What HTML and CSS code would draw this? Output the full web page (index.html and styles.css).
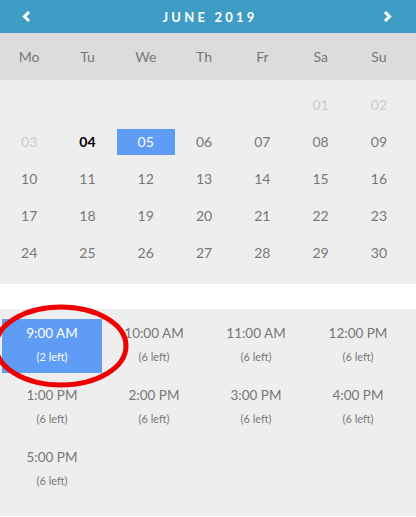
FILE: index.html
```html
<!DOCTYPE html>
<html lang="en">
<head>
    <meta charset="UTF-8">
    <meta name="viewport" content="width=device-width, initial-scale=1.0">
    <title>Book a slot</title>
    <link rel="stylesheet" href="styles.css">
</head>
<body>
    <div class="calendar">
        <div class="cal-header">
            <span class="nav">
                <svg width="9" height="11" viewBox="0 0 9 11"><path d="M7 1 L2.5 5.5 L7 10" fill="none" stroke="#fff" stroke-width="3"/></svg>
            </span>
            <span class="month">JUNE 2019</span>
            <span class="nav">
                <svg width="9" height="11" viewBox="0 0 9 11"><path d="M2 1 L6.5 5.5 L2 10" fill="none" stroke="#fff" stroke-width="3"/></svg>
            </span>
        </div>

        <div class="weekdays">
            <span>Mo</span><span>Tu</span><span>We</span><span>Th</span><span>Fr</span><span>Sa</span><span>Su</span>
        </div>

        <div class="days">
            <span></span><span></span><span></span><span></span><span></span>
            <span class="off">01</span><span class="off">02</span>
            <span class="off">03</span><span class="today">04</span><span class="picked">05</span><span>06</span><span>07</span><span>08</span><span>09</span>
            <span>10</span><span>11</span><span>12</span><span>13</span><span>14</span><span>15</span><span>16</span>
            <span>17</span><span>18</span><span>19</span><span>20</span><span>21</span><span>22</span><span>23</span>
            <span>24</span><span>25</span><span>26</span><span>27</span><span>28</span><span>29</span><span>30</span>
        </div>
    </div>

    <div class="slots">
        <div class="slot selected"><div class="time">9:00 AM</div><div class="left">(2 left)</div></div>
        <div class="slot"><div class="time">10:00 AM</div><div class="left">(6 left)</div></div>
        <div class="slot"><div class="time">11:00 AM</div><div class="left">(6 left)</div></div>
        <div class="slot"><div class="time">12:00 PM</div><div class="left">(6 left)</div></div>
        <div class="slot"><div class="time">1:00 PM</div><div class="left">(6 left)</div></div>
        <div class="slot"><div class="time">2:00 PM</div><div class="left">(6 left)</div></div>
        <div class="slot"><div class="time">3:00 PM</div><div class="left">(6 left)</div></div>
        <div class="slot"><div class="time">4:00 PM</div><div class="left">(6 left)</div></div>
        <div class="slot"><div class="time">5:00 PM</div><div class="left">(6 left)</div></div>

        <!-- annotation -->
        <svg class="mark" width="140" height="90" viewBox="0 0 140 90">
            <ellipse cx="67" cy="43" rx="65" ry="39" fill="none" stroke="#ee0000" stroke-width="5"/>
        </svg>
    </div>
</body>
</html>
```

FILE: styles.css
```css
body {
    margin: 0;
    padding: 0;
    font-family: Lato, "Open Sans", sans-serif;
    background: #fff;
    width: 416px;
    height: 517px;
    overflow: hidden;
}
.cal-header {
    height: 33px;
    background-color: #3f9cc4;
    display: flex;
    align-items: center;
    justify-content: space-between;
    padding: 0 24px 0 22px;
    color: white;
}
.nav {
    display: flex;
    align-items: center;
}
.month {
    font-size: 13px;
    font-weight: bold;
    letter-spacing: 3.2px;
    margin-left: 6px;
}
.weekdays {
    height: 47px;
    background-color: #dcdcdc;
    display: grid;
    grid-template-columns: repeat(7, 58.3px);
    align-items: center;
    color: #777;
    font-size: 14px;
    text-align: center;
}
.days {
    background-color: #eeeeee;
    display: grid;
    grid-template-columns: repeat(7, 58.3px);
    grid-auto-rows: 37px;
    align-items: center;
    justify-items: center;
    padding: 6px 0 13px 0;
    color: #777;
    font-size: 14px;
}
.days span {
    width: 58px;
    height: 26px;
    line-height: 26px;
    text-align: center;
}
.days .off {
    color: #cccccc;
}
.days .today {
    color: #000;
    font-weight: bold;
}
.days .picked {
    background-color: #5f9cf6;
    color: white;
}
.slots {
    position: relative;
    margin-top: 25px;
    background-color: #eeeeee;
    height: 207px;
    box-sizing: border-box;
    padding: 10px 0 0 2px;
    display: grid;
    grid-template-columns: repeat(4, 100px);
    grid-auto-rows: 54px;
    column-gap: 2px;
    row-gap: 8px;
    align-content: start;
}
.slot {
    text-align: center;
    color: #777;
}
.slot .time {
    font-size: 13.5px;
    margin-top: 6px;
}
.slot .left {
    font-size: 11px;
    margin-top: 9px;
}
.slot.selected {
    background-color: #5f9cf6;
    color: white;
}
.mark {
    position: absolute;
    left: -6px;
    top: -6px;
}
```
